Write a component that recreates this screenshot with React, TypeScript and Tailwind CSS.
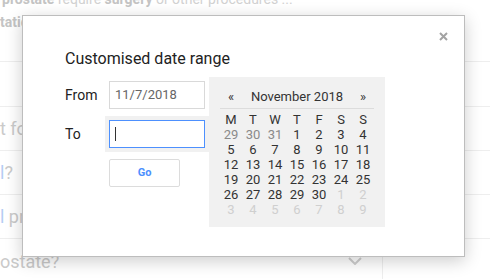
import React from "react";

type Day = { n: number; kind: "prev" | "cur" | "next" };

// Calendar grid for November 2018, Monday first
const days: Day[] = [
  ...[29, 30, 31].map((n) => ({ n, kind: "prev" as const })),
  ...Array.from({ length: 30 }, (_, i) => ({ n: i + 1, kind: "cur" as const })),
  ...Array.from({ length: 9 }, (_, i) => ({ n: i + 1, kind: "next" as const })),
];

const dayColor = {
  prev: "text-[#8a8a8a]",
  cur: "text-[#333]",
  next: "text-[#cfcfcf]",
};

function Calendar() {
  return (
    <div className="w-[176px] h-[150px] bg-[#f1f1f1] px-[11px] pt-[8px] text-[13px]">
      {/* Header */}
      <div className="grid grid-cols-7 h-[24px] border-b border-[#dcdcdc] leading-[23px]">
        <span className="text-center text-[#333]">«</span>
        <span className="col-span-5 text-center text-[#333]">November 2018</span>
        <span className="text-center text-[#333]">»</span>
      </div>

      {/* Weekdays */}
      <div className="grid grid-cols-7 mt-[3px] leading-[15px] text-[#333]">
        {["M", "T", "W", "T", "F", "S", "S"].map((d, i) => (
          <div key={i} className="text-center h-[15px]">
            {d}
          </div>
        ))}
      </div>

      {/* Days */}
      <div className="grid grid-cols-7 leading-[15px]">
        {days.map((d, i) => (
          <div key={i} className={`text-center h-[15px] ${dayColor[d.kind]}`}>
            {d.n}
          </div>
        ))}
      </div>
    </div>
  );
}

export default function App() {
  return (
    <div className="relative w-[490px] h-[279px] overflow-hidden bg-white font-[Roboto,Arial,sans-serif]">
      {/* Page behind the dialog */}
      <div className="h-[62px] border-b border-[#eeeeee] overflow-hidden">
        <div className="-mt-[12px] pl-[2px] text-[14px] leading-[23px] text-[#d2d2d2] whitespace-nowrap">
          <div>
            <b className="text-[#c4c4c4]">prostate</b> require{" "}
            <b className="text-[#c4c4c4]">surgery</b> or other procedures ...
          </div>
          <div className="-ml-[2px]">
            <b className="text-[#c4c4c4]">tation</b> and more
          </div>
        </div>
      </div>
      <div className="h-[45px] border-b border-[#eeeeee]" />
      <div className="h-[44px] border-b border-[#eeeeee] flex items-center text-[18px] text-[#cacaca] whitespace-nowrap">
        t for
      </div>
      <div className="h-[44px] border-b border-[#eeeeee] flex items-center text-[18px] text-[#cacaca] whitespace-nowrap">
        <span className="text-[#b5cdf3]">l</span>?
      </div>
      <div className="h-[44px] border-b border-[#eeeeee] flex items-center text-[18px] text-[#cacaca] whitespace-nowrap">
        <span className="text-[#b5cdf3]">l</span>&nbsp;pro
      </div>
      <div className="h-[44px] flex items-center text-[18px] text-[#cacaca] whitespace-nowrap">
        <div className="w-[327px]">ostate?</div>
        <div className="w-[56px] h-full flex items-center justify-center border-r border-[#eeeeee]">
          <svg width="14" height="8" viewBox="0 0 14 8" fill="none">
            <path d="M1 1l6 6 6-6" stroke="#cfcfcf" strokeWidth="2" />
          </svg>
        </div>
      </div>

      {/* Dialog */}
      <div className="absolute left-[22px] top-[15px] w-[443px] h-[242px] bg-white border border-[#bdbdbd] shadow-[0_4px_16px_rgba(0,0,0,0.2)]">
        <button className="absolute right-[16px] top-[16px] w-[9px] h-[9px]">
          <svg width="9" height="9" viewBox="0 0 9 9" className="block">
            <path d="M1 1l7 7M8 1l-7 7" stroke="#a3a3a3" strokeWidth="2" />
          </svg>
        </button>

        <div className="pl-[42px] pt-[33px]">
          <h2 className="text-[16px] leading-[20px] text-[#222]">Customised date range</h2>

          <div className="mt-[8px] flex">
            <div className="w-[144px] text-[14px] text-[#222]">
              {/* From */}
              <div className="flex items-center h-[36px]">
                <span className="w-[40px]">From</span>
                <div className="px-[4px]">
                  <div className="w-[96px] h-[28px] border border-[#d9d9d9] bg-white pl-[5px] flex items-center text-[13px] text-[#666]">
                    11/7/2018
                  </div>
                </div>
              </div>

              {/* To */}
              <div className="mt-[3px] flex items-center h-[36px]">
                <span className="w-[40px]">To</span>
                <div className="p-[4px] bg-[#f1f1f1]">
                  <div className="w-[96px] h-[28px] border border-[#4d90fe] bg-white pl-[5px] flex items-center">
                    <span className="w-px h-[14px] bg-[#333]" />
                  </div>
                </div>
              </div>

              <button className="mt-[7px] ml-[44px] w-[71px] h-[28px] border border-[#dcdcdc] rounded-[2px] bg-white text-[11px] font-bold text-[#4d90fe]">
                Go
              </button>
            </div>

            <Calendar />
          </div>
        </div>
      </div>
    </div>
  );
}
